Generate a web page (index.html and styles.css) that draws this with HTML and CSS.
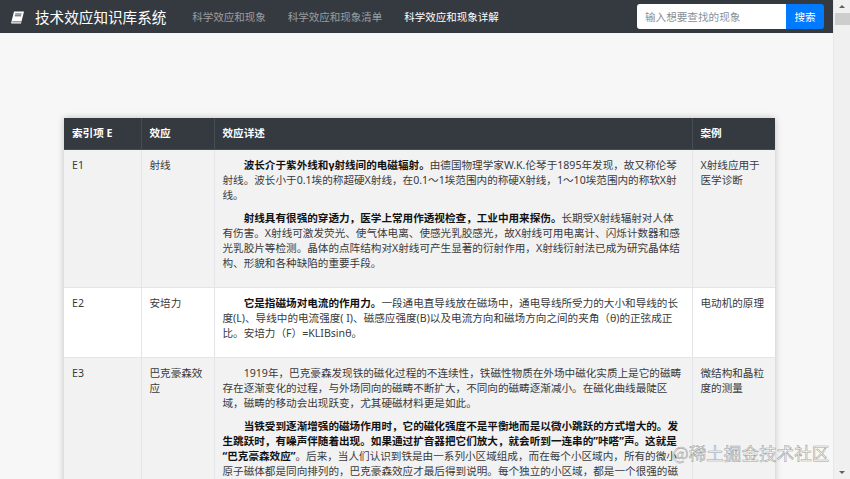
FILE: index.html
```html
<!DOCTYPE html>
<html lang="zh">
<head>
<meta charset="utf-8">
<title>技术效应知识库系统</title>
<link rel="stylesheet" href="styles.css">
</head>
<body>
<div class="window">
  <div class="page">
    <nav class="navbar">
      <a class="brand" href="#">
        <svg class="brand-icon" width="15" height="13" viewBox="0 0 15 13">
          <path d="M4 0.5 H14 L11.5 10.5 H1.5 Z" fill="#fff"/>
          <path d="M1.5 10.5 Q0.6 11.8 1.6 12.5 H11 L11.4 11.2 H2.6 Q2.1 11 2.4 10.5 Z" fill="#fff"/>
          <path d="M5.2 3 H11.6 M4.8 4.8 H11.1" stroke="#343a40" stroke-width="0.9"/>
        </svg>
        <span>技术效应知识库系统</span>
      </a>
      <ul class="nav-links">
        <li><a href="#">科学效应和现象</a></li>
        <li><a href="#">科学效应和现象清单</a></li>
        <li><a class="active" href="#">科学效应和现象详解</a></li>
      </ul>
      <form class="search">
        <input class="search-input" type="text" placeholder="输入想要查找的现象">
        <button class="search-btn" type="button">搜索</button>
      </form>
    </nav>
    <main class="content">
      <table class="effects">
        <colgroup>
          <col class="c1"><col class="c2"><col class="c3"><col class="c4">
        </colgroup>
        <thead>
          <tr><th>索引项 E</th><th>效应</th><th>效应详述</th><th>案例</th></tr>
        </thead>
        <tbody>
          <tr class="odd">
            <td>E1</td>
            <td>射线</td>
            <td>
              <p><b>波长介于紫外线和γ射线间的电磁辐射。</b>由德国物理学家W.K.伦琴于1895年发现，故又称伦琴射线。波长小于0.1埃的称超硬X射线，在0.1～1埃范围内的称硬X射线，1～10埃范围内的称软X射线。</p>
              <p><b>射线具有很强的穿透力，医学上常用作透视检查，工业中用来探伤。</b>长期受X射线辐射对人体有伤害。X射线可激发荧光、使气体电离、使感光乳胶感光，故X射线可用电离计、闪烁计数器和感光乳胶片等检测。晶体的点阵结构对X射线可产生显著的衍射作用，X射线衍射法已成为研究晶体结构、形貌和各种缺陷的重要手段。</p>
            </td>
            <td>X射线应用于医学诊断</td>
          </tr>
          <tr>
            <td>E2</td>
            <td>安培力</td>
            <td>
              <p><b>它是指磁场对电流的作用力。</b>一段通电直导线放在磁场中，通电导线所受力的大小和导线的长度(L)、导线中的电流强度( I)、磁感应强度(B)以及电流方向和磁场方向之间的夹角（θ)的正弦成正比。安培力（F）=KLIBsinθ。</p>
            </td>
            <td>电动机的原理</td>
          </tr>
          <tr class="odd">
            <td>E3</td>
            <td>巴克豪森效应</td>
            <td>
              <p>1919年，巴克豪森发现铁的磁化过程的不连续性，铁磁性物质在外场中磁化实质上是它的磁畴存在逐渐变化的过程，与外场同向的磁畴不断扩大，不同向的磁畴逐渐减小。在磁化曲线最陡区域，磁畴的移动会出现跃变，尤其硬磁材料更是如此。</p>
              <p><b>当铁受到逐渐增强的磁场作用时，它的磁化强度不是平衡地而是以微小跳跃的方式增大的。发生跳跃时，有噪声伴随着出现。如果通过扩音器把它们放大，就会听到一连串的”咔嗒”声。这就是“巴克豪森效应”</b>。后来，当人们认识到铁是由一系列小区域组成，而在每个小区域内，所有的微小原子磁体都是同向排列的，巴克豪森效应才最后得到说明。每个独立的小区域，都是一个很强的磁体，但由于各个磁畴的磁性彼此抵消，所以普通的铁并不显示磁性。</p>
            </td>
            <td>微结构和晶粒度的测量</td>
          </tr>
        </tbody>
      </table>
    </main>
  </div>
  <div class="scrollbar">
    <span class="arrow up"></span>
    <span class="thumb"></span>
    <span class="track"></span>
    <span class="arrow down"></span>
  </div>
  <div class="watermark">@稀土掘金技术社区</div>
</div>
</body>
</html>
```

FILE: styles.css
```css
* { box-sizing: border-box; }

html, body {
  margin: 0;
  height: 100%;
  overflow: hidden;
}

body {
  font-family: "Noto Sans", "Noto Sans CJK SC", sans-serif;
  font-size: 10.6px;
  color: #3a3a3a;
  background: #f7f7f7;
}

.window {
  display: flex;
  height: 100vh;
  position: relative;
}

.page {
  flex: 1;
  min-width: 0;
  display: flex;
  flex-direction: column;
}

/* navbar */
.navbar {
  height: 33px;
  background: #343a40;
  display: flex;
  align-items: center;
  padding: 0 9px 0 10px;
  flex-shrink: 0;
}

.brand {
  display: flex;
  align-items: center;
  gap: 10px;
  color: #fff;
  text-decoration: none;
  font-size: 14.6px;
  font-family: "Noto Sans CJK SC", sans-serif;
}

.brand-icon { display: block; margin-top: 1px; }

.nav-links {
  list-style: none;
  display: flex;
  gap: 22px;
  margin: 0 0 0 26px;
  padding: 0;
  font-family: "Noto Sans CJK SC", sans-serif;
  font-size: 10.5px;
}

.nav-links a {
  color: rgba(255, 255, 255, 0.5);
  text-decoration: none;
}

.nav-links a.active { color: #fff; }

.search {
  margin-left: auto;
  display: flex;
  height: 25px;
}

.search-input {
  width: 149px;
  height: 25px;
  border: none;
  border-radius: 3px 0 0 3px;
  padding: 0 8px;
  font-family: "Noto Sans CJK SC", sans-serif;
  font-size: 10.6px;
  background: #fff;
  outline: none;
}

.search-input::placeholder { color: #8a8f94; }

.search-btn {
  width: 38px;
  height: 25px;
  border: none;
  border-radius: 0 3px 3px 0;
  background: #007bff;
  color: #fff;
  font-family: "Noto Sans CJK SC", sans-serif;
  font-size: 10.6px;
  padding: 0;
}

/* content */
.content {
  padding: 85px 0 0 64px;
}

.effects {
  width: 711px;
  table-layout: fixed;
  border-collapse: collapse;
  background: #fff;
  box-shadow: 0 0 7px rgba(0, 0, 0, 0.22);
  line-height: 15px;
}

.c1 { width: 77px; }
.c2 { width: 73px; }
.c3 { width: 478px; }
.c4 { width: 83px; }

.effects th {
  background: #343a40;
  color: #fff;
  font-weight: bold;
  text-align: left;
  padding: 8px;
  border: 1px solid #454d55;
  border-top: none;
}

.effects td {
  padding: 8px;
  vertical-align: top;
  border: 1px solid #e3e5e8;
  border-top-color: #dee2e6;
}

.effects td:first-child, .effects th:first-child { border-left: none; }
.effects td:last-child, .effects th:last-child { border-right: none; }

.effects tr.odd td { background: #f2f2f2; }

.effects p {
  margin: 0 0 8px;
  text-indent: 2em;
}

.effects b { color: #111; }

/* fake scrollbar */
.scrollbar {
  width: 17px;
  flex-shrink: 0;
  background: #f0f0f0;
  display: flex;
  flex-direction: column;
  align-items: center;
  border-left: 1px solid #e8e8e8;
}

.arrow {
  width: 0;
  height: 0;
  border-left: 3.5px solid transparent;
  border-right: 3.5px solid transparent;
  margin: 5px 0;
}

.arrow.up { border-bottom: 3.5px solid #606060; }
.arrow.down { border-top: 3.5px solid #606060; }

.thumb {
  width: 15px;
  height: 12px;
  background: #cdcdcd;
}

.track { flex: 1; }

.watermark {
  position: absolute;
  left: 672px;
  top: 440px;
  font-family: "Noto Sans CJK SC", sans-serif;
  font-size: 17.6px;
  color: rgba(255, 255, 255, 0.85);
  -webkit-text-stroke: 0.6px rgba(120, 120, 120, 0.7);
  white-space: nowrap;
}
```
